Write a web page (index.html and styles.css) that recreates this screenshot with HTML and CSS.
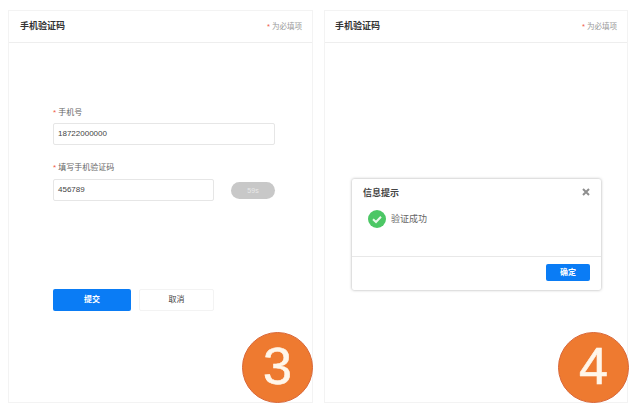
FILE: index.html
```html
<!DOCTYPE html>
<html lang="zh">
<head>
<meta charset="utf-8">
<title>手机验证码</title>
<link rel="stylesheet" href="styles.css">
</head>
<body>
<main class="page">
  <section class="card">
    <header class="card-head">
      <h2 class="card-title">手机验证码</h2>
      <span class="hint"><i class="star">*</i> 为必填项</span>
    </header>
    <form class="form">
      <div class="field">
        <div class="label"><i class="star">*</i> 手机号</div>
        <div class="input">18722000000</div>
      </div>
      <div class="field field-second">
        <div class="label"><i class="star">*</i> 填写手机验证码</div>
        <div class="code-row">
          <div class="input input-code">456789</div>
          <div class="pill">59s</div>
        </div>
      </div>
      <div class="actions">
        <div class="btn btn-primary">提交</div>
        <div class="btn btn-ghost">取消</div>
      </div>
    </form>
    <div class="badge">3</div>
  </section>

  <section class="card card-right">
    <header class="card-head">
      <h2 class="card-title">手机验证码</h2>
      <span class="hint"><i class="star">*</i> 为必填项</span>
    </header>
    <div class="dialog">
      <div class="dialog-head">
        <span class="dialog-title">信息提示</span>
        <svg class="close" viewBox="0 0 8 8" width="8" height="8"><path d="M1 1l6 6M7 1L1 7" stroke="#8e8e8e" stroke-width="2" fill="none"/></svg>
      </div>
      <div class="dialog-body">
        <svg class="check" viewBox="0 0 18 18" width="18" height="18"><circle cx="9" cy="9" r="9" fill="#4cc765"/><path d="M5 9.2l3 2.8 5-5.2" stroke="#e8f8ea" stroke-width="2" fill="none"/></svg>
        <span class="dialog-text">验证成功</span>
      </div>
      <div class="dialog-foot">
        <div class="btn-ok">确定</div>
      </div>
    </div>
    <div class="badge">4</div>
  </section>
</main>
</body>
</html>
```
FILE: styles.css
```css
* { box-sizing: border-box; }
html, body { margin: 0; padding: 0; background: #fff; }
body {
  width: 640px;
  height: 414px;
  overflow: hidden;
  font-family: "Liberation Sans", "Noto Sans CJK SC", sans-serif;
  color: #444;
}
.page {
  display: flex;
  gap: 11px;
  padding: 10px 0 0 8px;
}
.card {
  position: relative;
  width: 305px;
  height: 393px;
  border: 1px solid #f3f3f3;
}
.card-right { width: 304px; }
.card-head {
  height: 32px;
  display: flex;
  align-items: center;
  justify-content: space-between;
  padding: 0 10px 2px 11px;
  border-bottom: 1px solid #eeeeee;
}
.card-right .card-head { padding-left: 10px; }
.card-title { margin: 0; font-size: 9px; font-weight: 700; color: #333; }
.hint { font-size: 7.5px; color: #999; }
.star { font-style: normal; color: #f05a4a; }
.form { padding: 64px 0 0 44px; }
.label { font-size: 8px; line-height: 12px; color: #666; margin-bottom: 4px; }
.input {
  width: 222px;
  height: 22px;
  line-height: 20px;
  padding-left: 4px;
  border: 1px solid #e6e6e6;
  border-radius: 2px;
  font-size: 8px;
  color: #444;
}
.field-second { margin-top: 17px; }
.code-row { display: flex; align-items: center; gap: 17px; margin-top: 5px; }
.input.input-code { width: 161px; }
.pill {
  width: 44px;
  height: 17px;
  line-height: 17px;
  border-radius: 9px;
  background: #c8c8c8;
  color: #e8e8e8;
  font-size: 7px;
  text-align: center;
}
.actions { display: flex; gap: 8px; margin-top: 88px; }
.btn {
  height: 22px;
  line-height: 22px;
  text-align: center;
  font-size: 8px;
  border-radius: 2px;
}
.btn-primary { width: 78px; background: #0a7cf5; color: #fff; font-weight: 700; }
.btn-ghost { width: 75px; line-height: 20px; border: 1px solid #f3f3f3; color: #444; }
.badge {
  position: absolute;
  right: -1px;
  bottom: -1px;
  width: 71px;
  height: 71px;
  border-radius: 50%;
  background: #ee7a30;
  border: 1px solid #d9683a;
  color: #fff6ea;
  font-size: 52px;
  line-height: 67px;
  text-align: center;
  -webkit-text-stroke: 0.6px #fff6ea;
}
.card-right .badge { right: -2px; }
.dialog {
  position: absolute;
  left: 27px;
  top: 168px;
  width: 249px;
  height: 111px;
  background: #fff;
  border-radius: 2px;
  box-shadow: 0 0 3px rgba(0, 0, 0, 0.35);
  display: flex;
  flex-direction: column;
}
.dialog-head {
  display: flex;
  align-items: center;
  justify-content: space-between;
  padding: 7px 11px 0 11px;
  height: 19px;
}
.dialog-title { font-size: 9px; font-weight: 700; color: #444; }
.dialog-body {
  display: flex;
  gap: 5px;
  padding: 12px 0 0 16px;
  flex: 1;
  align-items: flex-start;
}
.check { flex: none; }
.dialog-text { font-size: 9px; line-height: 16px; color: #666; margin-top: 1px; }
.dialog-foot {
  height: 34px;
  border-top: 1px solid #e8e8e8;
  display: flex;
  justify-content: flex-end;
  padding: 7px 11px 0 0;
}
.btn-ok {
  width: 44px;
  height: 17px;
  line-height: 17px;
  background: #0a7cf5;
  color: #fff;
  border-radius: 2px;
  font-size: 8px;
  font-weight: 700;
  text-align: center;
}
```
